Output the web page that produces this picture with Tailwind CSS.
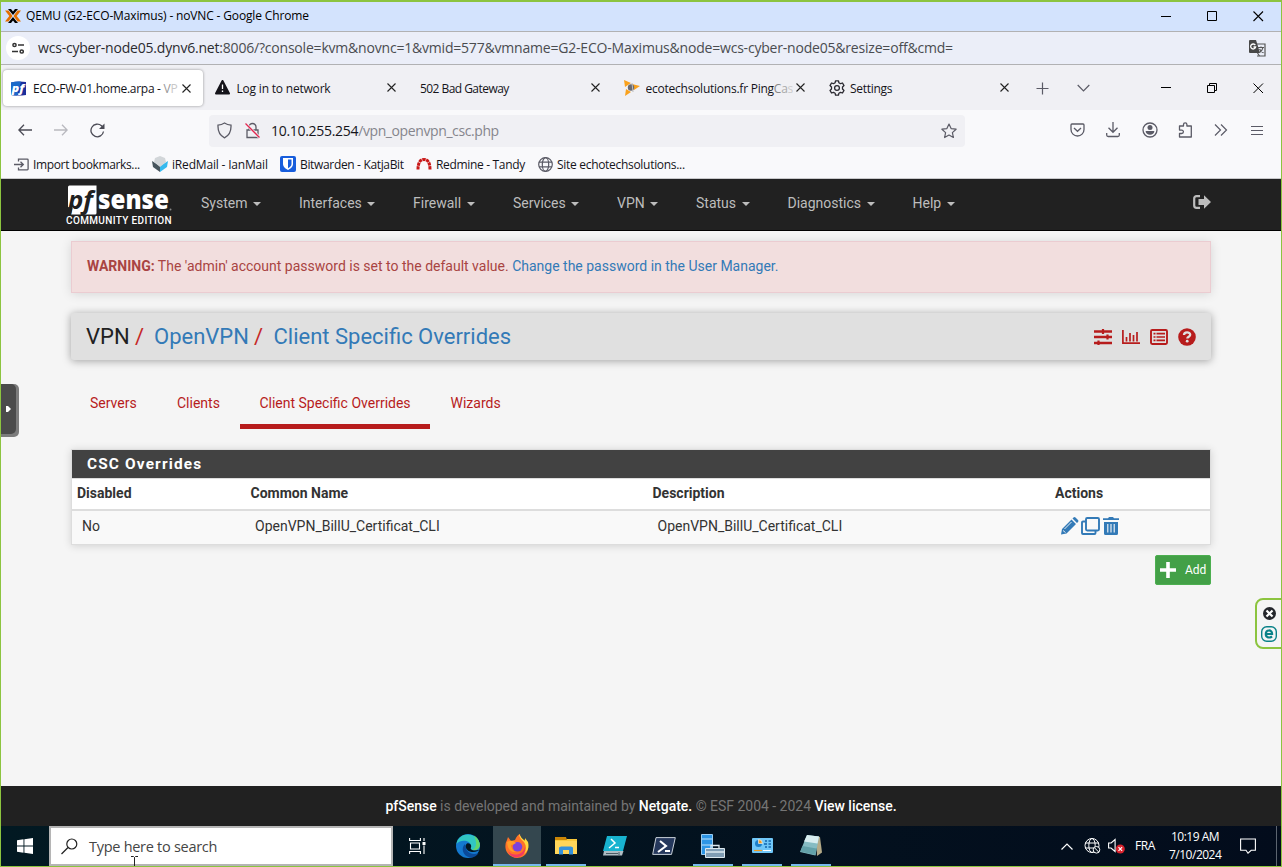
<!DOCTYPE html>
<html lang="en">
<head>
<meta charset="utf-8">
<title>QEMU (G2-ECO-Maximus) - noVNC - Google Chrome</title>
<script src="https://cdn.jsdelivr.net/npm/@tailwindcss/browser@4"></script>
</head>
<body class="w-[1282px] h-[867px] overflow-hidden">
<div class="relative w-[1282px] h-[867px] flex flex-col border-[#8cc43f] border-x border-t-2 border-b overflow-hidden bg-[#f5f5f5] font-['Open_Sans','Noto_Sans',sans-serif] text-[12px] leading-4 text-[#15141a] whitespace-nowrap">

  <!-- Chrome title bar -->
  <header class="h-[30px] shrink-0 flex items-center bg-[#d3e3fd] border-b border-[#b1b1b3] pl-1">
    <svg class="w-4 h-4 mt-[-2px]" viewBox="0 0 16 16"><path d="M3 1h3l2 2.600L10 1h3L8 7zM3 15h3l2-2.600 2 2.600h3L8 9z" fill="#000"/><path d="M0 2.500h3.500L7.500 8l-4 5.500H0L4.300 8zM16 2.500h-3.500L8.500 8l4 5.500H16L11.700 8z" fill="#e57000"/></svg>
    <span class="ml-[5px] mt-[-1px] tracking-[-0.15px] text-black">QEMU (G2-ECO-Maximus) - noVNC - Google Chrome</span>
    <div class="ml-auto flex items-center pr-[17px] gap-[35px] mt-[-1px]">
      <svg class="w-[11px] h-[11px]" viewBox="0 0 11 11"><path d="M0 5.500h10" stroke="#000"/></svg>
      <svg class="w-[11px] h-[11px]" viewBox="0 0 11 11"><path d="M.5.500h9v9H.5z" fill="none" stroke="#000"/></svg>
      <svg class="w-[11px] h-[11px]" viewBox="0 0 11 11"><path d="M.5.500l9.500 9.500M10 .5L.5 10" stroke="#000" stroke-width="1.100"/></svg>
    </div>
  </header>

  <!-- Chrome address bar -->
  <div class="h-[33px] shrink-0 flex items-center bg-[#ebeef8] border-b border-[#b1b1b3] pl-[5px]">
    <div class="w-6 h-6 rounded-full bg-white flex items-center justify-center">
      <svg class="w-3 h-3" viewBox="0 0 12 12" fill="none" stroke="#333" stroke-width="1.500"><circle cx="2.500" cy="3" r="1.600"/><path d="M6 3h6M0 9.500h6"/><circle cx="9.700" cy="9.500" r="1.600"/></svg>
    </div>
    <span class="ml-2 text-[14px] tracking-[-0.2px] text-[#4a4c50]"><span class="text-[#2b2c30]">wcs-cyber-node05.dynv6.net</span>:8006/?console=kvm&amp;novnc=1&amp;vmid=577&amp;vmname=G2-ECO-Maximus&amp;node=wcs-cyber-node05&amp;resize=off&amp;cmd=</span>
    <svg class="ml-auto mr-[15px] w-[17px] h-[17px]" viewBox="0 0 17 17"><path d="M7 4h9v12H8" fill="#ebeef8" stroke="#555" stroke-width="1.200"/><path d="M1 0h6l4 13H1a1 1 0 0 1-1-1V1a1 1 0 0 1 1-1z" fill="#484848"/><path d="M6.300 5.200A2.500 2.500 0 1 0 6.600 7H4.500" fill="none" stroke="#fff" stroke-width="1.300"/><path d="M9 7.500h6M12 6.500v1M14 7.500c-.5 2.500-2 4-3.500 5M10.500 9c1 1.800 2.500 3 4 3.800M8.500 13l2 3" fill="none" stroke="#555" stroke-width="1.200"/></svg>
  </div>

  <!-- Firefox tab strip -->
  <div class="h-[45px] shrink-0 flex items-center bg-[#f0f0f4] pl-[1px]">
    <div class="w-[204.500px] h-9 flex items-center pl-[9px] mt-px">
      <div class="flex items-center w-[200px] h-9 shrink-0 -ml-2 pl-2 bg-white rounded shadow-[0_0_3px_rgba(0,0,0,0.4)]">
        <svg class="w-[15px] h-[15px] shrink-0" viewBox="0 0 15 15"><path d="M0 1.500Q7 0 15 1v13Q7 15 0 14z" fill="#1c2f9c"/><path d="M0 1.500Q5 .3 10 .7L6 14.600 0 14z" fill="#1b6ac9"/><text x="0.800" y="11" font-family="Open Sans" font-size="11" font-weight="800" font-style="italic" fill="#fff" textLength="12.500" lengthAdjust="spacingAndGlyphs">pf</text></svg>
        <span class="ml-[7px] mt-[2px] w-[147px] overflow-hidden tracking-[-0.28px]">ECO-FW-01.home.arpa - <span class="text-[#999]">V</span><span class="text-[#c8c8c8]">P</span></span>
        <svg class="w-[9px] h-[9px] ml-[2px] shrink-0" viewBox="0 0 9 9"><path d="M.5.500l8 8M8.500.500l-8 8" stroke="#222" stroke-width="1.100"/></svg>
      </div>
    </div>
    <div class="w-[204.500px] flex items-center pl-[8px]">
      <svg class="w-[15px] h-[15px] shrink-0" viewBox="0 0 15 15"><path d="M7.500 1L14 13.500H1z" fill="#15141a" stroke="#15141a" stroke-width="2" stroke-linejoin="round"/><path d="M7.500 4.500V9M7.500 10.500V12" stroke="#fff" stroke-width="1.300"/></svg>
      <span class="ml-[7px] w-[150px] tracking-[-0.2px] mt-[3px]">Log in to network</span>
      <svg class="w-[9px] h-[9px] shrink-0" viewBox="0 0 9 9"><path d="M.5.500l8 8M8.500.500l-8 8" stroke="#222" stroke-width="1.100"/></svg>
    </div>
    <div class="w-[204.500px] flex items-center pl-[9px]">
      <span class="w-[171px] tracking-[-0.55px] mt-[3px]">502 Bad Gateway</span>
      <svg class="w-[9px] h-[9px] shrink-0" viewBox="0 0 9 9"><path d="M.5.500l8 8M8.500.500l-8 8" stroke="#222" stroke-width="1.100"/></svg>
    </div>
    <div class="w-[204.500px] flex items-center pl-[8px]">
      <svg class="w-4 h-4 shrink-0" viewBox="0 0 16 16"><path d="M0 0l7 3-6 4zM16 6l-6 4-2-6zM1 16l1-7 5 3z" fill="#f9a11c"/><circle cx="7" cy="7.500" r="3.200" fill="#6a6a70"/><path d="M8 3l1 9" stroke="#bbb"/></svg>
      <span class="ml-[6px] w-[147px] overflow-hidden tracking-[-0.24px] mt-[3px]">ecotechsolutions.fr Ping<span class="text-[#888]">C</span><span class="text-[#aaa]">a</span><span class="text-[#ccc]">s</span></span>
      <svg class="w-[9px] h-[9px] ml-[3px] shrink-0" viewBox="0 0 9 9"><path d="M.5.500l8 8M8.500.500l-8 8" stroke="#222" stroke-width="1.100"/></svg>
    </div>
    <div class="w-[204.500px] flex items-center pl-[9px]">
      <svg class="w-4 h-4 shrink-0" viewBox="0 0 16 16" fill="none" stroke="#2a2930" stroke-width="1.300" stroke-linejoin="round"><path d="M6.500.800h3l.4 2 1.600.9 2-.7 1.500 2.600L13.500 7v2l1.500 1.400-1.500 2.600-2-.7-1.600.9-.4 2h-3l-.4-2-1.600-.9-2 .7L1 10.400 2.500 9V7L1 5.600 2.500 3l2 .7 1.600-.9z"/><circle cx="8" cy="8" r="2.400"/></svg>
      <span class="ml-[5px] w-[150px] tracking-[-0.3px] mt-[3px]">Settings</span>
      <svg class="w-[9px] h-[9px] shrink-0" viewBox="0 0 9 9"><path d="M.5.500l8 8M8.500.500l-8 8" stroke="#222" stroke-width="1.100"/></svg>
    </div>
    <svg class="ml-[11px] w-[13px] h-[13px] mt-px" viewBox="0 0 13 13"><path d="M6.500.500v12M.5 6.500h12" stroke="#5b5b66" stroke-width="1.200"/></svg>
    <svg class="ml-[28px] w-[13px] h-[8px]" viewBox="0 0 13 8"><path d="M.7 1l5.800 5.800L12.300 1" fill="none" stroke="#5b5b66" stroke-width="1.200"/></svg>
    <div class="ml-auto flex items-center pr-[17px] gap-[35px] mt-px">
      <svg class="w-[11px] h-[11px]" viewBox="0 0 11 11"><path d="M0 4.500h10" stroke="#000"/></svg>
      <svg class="w-[11px] h-[11px]" viewBox="0 0 11 11"><path d="M.5 2.500h7v7H.5zM2.500 2.500v-2h7v7h-2" fill="none" stroke="#000"/></svg>
      <svg class="w-[11px] h-[11px]" viewBox="0 0 11 11"><path d="M.5.500l9.500 9.500M10 .5L.5 10" stroke="#000"/></svg>
    </div>
  </div>

  <!-- Firefox navigation toolbar -->
  <div class="h-10 shrink-0 flex items-center bg-[#f9f9fb] pl-[17px] text-[#5b5b66]">
    <svg class="w-[14px] h-[12px]" viewBox="0 0 14 12" fill="none" stroke="#4b4b55" stroke-width="1.300"><path d="M14 6H1M6 .8L.9 6 6 11.200"/></svg>
    <svg class="ml-[22px] w-[14px] h-[12px]" viewBox="0 0 14 12" fill="none" stroke="#b9b9bf" stroke-width="1.300"><path d="M0 6h13M8 .8L13.100 6 8 11.200"/></svg>
    <svg class="ml-[22px] w-[15px] h-[15px]" viewBox="0 0 15 15"><path d="M13.500 8.500A6.300 6.300 0 1 1 11.500 2.800L13.200 4.500" fill="none" stroke="#4b4b55" stroke-width="1.300"/><path d="M14.500.500V6H9z" fill="#4b4b55"/></svg>
    <div class="ml-[104px] w-[756px] h-8 rounded bg-[#f0f0f4] flex items-center pl-[8px] pr-[8px] mt-px">
      <svg class="w-[15px] h-[17px]" viewBox="0 0 15 17"><path d="M7.500 1C5.500 2.300 3.300 3 1 3.200c-.3 6 1.500 10.300 6.500 12.600 5-2.300 6.800-6.600 6.500-12.600C11.700 3 9.500 2.300 7.500 1z" fill="none" stroke="#5b5b66" stroke-width="1.300"/></svg>
      <svg class="ml-[13px] w-[15px] h-[17px]" viewBox="0 0 15 17"><path d="M4 8V5a3.500 3.500 0 0 1 7 0v3M2 8h11v7.500H2z" fill="none" stroke="#5b5b66" stroke-width="1.300"/><path d="M.5 1.500l14 14" stroke="#f0f0f4" stroke-width="3"/><path d="M.5 1.500l14 14" stroke="#e22850" stroke-width="1.300"/></svg>
      <span class="ml-[11px] text-[14px] mt-px"><span class="text-[#15141a] tracking-[-0.3px]">10.10.255.254</span><span class="text-[#85858c] tracking-[-0.4px]">/vpn_openvpn_csc.php</span></span>
      <svg class="ml-auto w-4 h-4" viewBox="0 0 16 16"><path d="M8 1l2.100 4.600 5 .6-3.700 3.400 1 4.900L8 12l-4.400 2.500 1-4.900L.9 6.200l5-.6z" fill="none" stroke="#5b5b66" stroke-width="1.200" stroke-linejoin="round"/></svg>
    </div>
    <div class="ml-auto mr-[18px] flex items-center">
      <svg class="w-[15px] h-[14px] mr-[21px]" viewBox="0 0 15 14" fill="none" stroke="#5b5b66" stroke-width="1.300"><path d="M2 1h11a1 1 0 0 1 1 1v4.500a6.500 6.500 0 0 1-13 0V2a1 1 0 0 1 1-1z"/><path d="M4 5l3.500 3.300L11 5"/></svg>
      <svg class="w-[14px] h-[16px] mr-[22px]" viewBox="0 0 14 16" fill="none" stroke="#5b5b66" stroke-width="1.300"><path d="M7 0v10M2.500 5.800L7 10.300l4.500-4.500M.7 11v2a1.500 1.500 0 0 0 1.500 1.500h9.600a1.500 1.500 0 0 0 1.500-1.500v-2"/></svg>
      <svg class="w-[16px] h-[16px] mr-[20px]" viewBox="0 0 16 16"><circle cx="8" cy="8" r="7" fill="none" stroke="#5b5b66" stroke-width="1.300"/><circle cx="8" cy="5.600" r="2.500" fill="#5b5b66"/><path d="M3.600 9h8.800c-.2 2.500-2 3.700-4.400 3.700S3.800 11.500 3.600 9z" fill="#5b5b66"/></svg>
      <svg class="w-[15px] h-[16px] mr-[21px]" viewBox="0 0 15 16"><path d="M5.500 4V2.500a1.700 1.700 0 0 1 3.400 0V4h4.400v11H1.500v-3.500h2.200a1.700 1.700 0 0 0 0-3.400H1.500V4z" fill="none" stroke="#5b5b66" stroke-width="1.300" stroke-linejoin="round"/></svg>
      <svg class="w-[14px] h-[12px] mr-[23px]" viewBox="0 0 14 12" fill="none" stroke="#5b5b66" stroke-width="1.200"><path d="M1 .5L6.500 6 1 11.500M7 .5L12.500 6 7 11.500"/></svg>
      <svg class="w-[12px] h-[11px]" viewBox="0 0 12 11"><path d="M0 1.500h12M0 5.500h12M0 9.500h12" stroke="#5b5b66"/></svg>
    </div>
  </div>

  <!-- Firefox bookmarks -->
  <div class="h-[29px] shrink-0 flex items-center bg-[#f9f9fb] border-b border-[#c9c9cb] pl-[13px]">
    <div class="w-[138px] flex items-center">
      <svg class="w-[15px] h-[13px] shrink-0" viewBox="0 0 15 13" fill="none" stroke="#5b5b66" stroke-width="1.300"><path d="M4.500 3.500V1.200h8.800a.8.800 0 0 1 .8.800v9a.8.800 0 0 1-.8.800H4.500V9.500M0 6.500h9M6.500 3.800L9.300 6.500 6.500 9.200"/></svg>
      <span class="ml-[4px] mt-[2px] tracking-[-0.36px]">Import bookmarks...</span>
    </div>
    <div class="w-[128px] flex items-center">
      <svg class="w-4 h-4 shrink-0" viewBox="0 0 16 16"><path d="M0 5l8 5v6L1 11z" fill="#46545c"/><path d="M16 5l-8 5v6l7-5z" fill="#35b9ee"/><path d="M3 2l5-2 5 2 1 4-6 5-6-5z" fill="#d2d6d9"/></svg>
      <span class="ml-[4px] mt-[2px] tracking-[-0.18px]">iRedMail - IanMail</span>
    </div>
    <div class="w-[136px] flex items-center">
      <svg class="w-4 h-4 shrink-0" viewBox="0 0 16 16"><rect width="16" height="16" rx="2" fill="#175ddc"/><path d="M3 2h10v6c0 3-3 5-5 6-2-1-5-3-5-6z" fill="#fff"/><path d="M8 3.500h3.500V8c0 2-2 3.500-3.500 4.300z" fill="#175ddc"/></svg>
      <span class="ml-[4px] mt-[2px] tracking-[-0.34px]">Bitwarden - KatjaBit</span>
    </div>
    <div class="w-[122px] flex items-center">
      <svg class="w-4 h-4 shrink-0" viewBox="0 0 16 16"><path d="M2 13.500C2 7 4 3.500 8 3.500s6 3.500 6 10" fill="none" stroke="#c91818" stroke-width="3" stroke-dasharray="3.200 .6"/></svg>
      <span class="ml-[4px] mt-[2px] tracking-[-0.33px]">Redmine - Tandy</span>
    </div>
    <svg class="w-[15px] h-[15px] shrink-0" viewBox="0 0 15 15" fill="none" stroke="#5b5b66" stroke-width="1.200"><circle cx="7.500" cy="7.500" r="6.800"/><ellipse cx="7.500" cy="7.500" rx="3.200" ry="6.800"/><path d="M1 5.200h13M1 9.800h13"/></svg>
    <span class="ml-[4px] mt-[2px] tracking-[-0.3px]">Site echotechsolutions...</span>
  </div>

  <!-- pfSense web interface -->
  <main class="h-[647px] shrink-0 flex flex-col font-[Roboto,sans-serif] text-[14px] leading-5 text-[#333]">
    <nav class="h-[52px] shrink-0 flex items-center bg-[#212121] border-b border-black pl-[65px] text-[#bdbdbd]">
      <div class="w-[135px] flex flex-col text-white pt-[2px]">
        <svg class="ml-[1px] w-[106px] h-[30px] overflow-visible" viewBox="0 0 106 30"><path d="M1 2A1.500 1.500 0 0 1 2.500.500H29.500V28a1.500 1.500 0 0 1-1.500 1.500H4L5.500 23 1 22z" fill="#fff"/><text x="1" y="23.500" font-family="Open Sans" font-size="25" font-weight="700" font-style="italic" fill="#212121" textLength="25" lengthAdjust="spacingAndGlyphs">pf</text><text x="31" y="24" font-family="Open Sans" font-size="27" font-weight="800" fill="#fff" textLength="71" lengthAdjust="spacingAndGlyphs">sense</text><circle cx="103.500" cy="24.500" r="1" fill="#888"/></svg>
        <span class="text-[10px] leading-[12px] font-medium tracking-[0.36px]">COMMUNITY EDITION</span>
      </div>
      <div class="flex items-center pb-[3px]">
        <a class="w-[98px] flex items-center gap-[6px]">System<svg class="w-[8px] h-[4px] mt-[2px]" viewBox="0 0 8 4"><path d="M0 0h8L4 4z" fill="#bdbdbd"/></svg></a>
        <a class="w-[114px] flex items-center gap-[5px]">Interfaces<svg class="w-[8px] h-[4px] mt-[2px]" viewBox="0 0 8 4"><path d="M0 0h8L4 4z" fill="#bdbdbd"/></svg></a>
        <a class="w-[100px] flex items-center gap-[6px]">Firewall<svg class="w-[8px] h-[4px] mt-[2px]" viewBox="0 0 8 4"><path d="M0 0h8L4 4z" fill="#bdbdbd"/></svg></a>
        <a class="w-[104px] flex items-center gap-[5px]">Services<svg class="w-[8px] h-[4px] mt-[2px]" viewBox="0 0 8 4"><path d="M0 0h8L4 4z" fill="#bdbdbd"/></svg></a>
        <a class="w-[79px] flex items-center gap-[5px]">VPN<svg class="w-[8px] h-[4px] mt-[2px]" viewBox="0 0 8 4"><path d="M0 0h8L4 4z" fill="#bdbdbd"/></svg></a>
        <a class="w-[91.500px] flex items-center gap-[6px]">Status<svg class="w-[8px] h-[4px] mt-[2px]" viewBox="0 0 8 4"><path d="M0 0h8L4 4z" fill="#bdbdbd"/></svg></a>
        <a class="w-[125px] flex items-center gap-[6px]">Diagnostics<svg class="w-[8px] h-[4px] mt-[2px]" viewBox="0 0 8 4"><path d="M0 0h8L4 4z" fill="#bdbdbd"/></svg></a>
        <a class="flex items-center gap-[6px]">Help<svg class="w-[8px] h-[4px] mt-[2px]" viewBox="0 0 8 4"><path d="M0 0h8L4 4z" fill="#bdbdbd"/></svg></a>
      </div>
      <svg class="ml-auto mr-[70px] mb-[5px] w-[18px] h-[14px]" viewBox="0 0 18 14"><path d="M7 1.100H3.500a2.300 2.300 0 0 0-2.300 2.300v7.200a2.300 2.300 0 0 0 2.300 2.300H7" fill="none" stroke="#bdbdbd" stroke-width="2.200"/><path d="M11 .3L18 7l-7 6.700V10H5.500V4H11z" fill="#bdbdbd"/></svg>
    </nav>

    <div class="flex-1 flex flex-col pl-[70px] pr-[70px] pt-[10px]">
      <div class="h-[52px] shrink-0 flex items-center bg-[#f2dede] border border-[#ebccd1] shadow-[0_1px_10px_rgba(0,0,0,0.13)] px-[15px] pb-[2px] text-[#a94442]"><span><b>WARNING:</b> The 'admin' account password is set to the default value. <a class="text-[#337ab7]">Change the password in the User Manager.</a></span></div>

      <div class="mt-5 h-[47px] shrink-0 flex items-center bg-[#e0e0e0] rounded-[3px] shadow-[0_1px_8px_rgba(0,0,0,0.35)] pl-[15px] pr-[15px] text-[22px] text-[#212121]">
        <div class="flex"><span class="w-[49px]">VPN</span><span class="w-[19px] text-[#c62828]">/</span><a class="w-[100px] text-[#337ab7]">OpenVPN</a><span class="w-[19.500px] text-[#c62828]">/</span><a class="text-[#337ab7]">Client Specific Overrides</a></div>
        <div class="ml-auto mt-px flex items-center gap-[10px]">
          <svg class="w-[18px] h-[16px]" viewBox="0 0 18 16"><path d="M0 2.500h18M0 8h18M0 14h18" stroke="#b71c1c" stroke-width="2.400"/><path d="M9 0v5M13.500 5.500v5M4.500 11.500V16" stroke="#b71c1c" stroke-width="2.200"/></svg>
          <svg class="w-[18px] h-[14px]" viewBox="0 0 18 14"><path d="M.9 0v13.100H18M4.500 7v4.500M8 3v8.500M11.500 5v6.500M15 2v9.500" fill="none" stroke="#b71c1c" stroke-width="1.700"/></svg>
          <svg class="w-[18px] h-[16px]" viewBox="0 0 18 16"><rect x="1" y="1" width="16" height="14" rx="1.200" fill="none" stroke="#b71c1c" stroke-width="1.900"/><path d="M3.500 4.700h2M3.500 8h2M3.500 11.300h2M6.500 4.700h8.500M6.500 8h8.500M6.500 11.300h8.500" stroke="#b71c1c" stroke-width="1.700"/></svg>
          <svg class="w-[18px] h-[18px]" viewBox="0 0 18 18"><circle cx="9" cy="9" r="8.800" fill="#b71c1c"/><path d="M6 7c0-3.400 6.200-3.400 6.200-.3 0 2-2.900 2-2.900 3.900" fill="none" stroke="#e0e0e0" stroke-width="2.300"/><circle cx="9.200" cy="13.200" r="1.400" fill="#e0e0e0"/></svg>
        </div>
      </div>

      <div class="mt-[18px] h-[51px] shrink-0 flex text-[#b71c1c]">
        <a class="pl-[19px] w-[86px] pt-[15px]">Servers</a>
        <a class="pl-[20px] w-[83px] pt-[15px]">Clients</a>
        <a class="w-[190px] text-center pt-[15px] border-b-[5px] border-[#b71c1c]">Client Specific Overrides</a>
        <a class="pl-[20.500px] pt-[15px]">Wizards</a>
      </div>

      <section class="mt-5 h-[96px] shrink-0 flex flex-col border border-[#ddd] shadow-[0_1px_8px_rgba(0,0,0,0.15)] bg-white">
        <h2 class="h-7 shrink-0 flex items-center bg-[#424242] text-white pl-[15px] pb-px font-bold text-[15.400px] tracking-[1.150px]">CSC Overrides</h2>
        <div class="grid grid-cols-[173.500px_402px_402.500px_1fr] items-center h-[33px] border-t border-b-2 border-[#ddd] pl-[5px] pb-[2px] font-bold"><span>Disabled</span><span>Common Name</span><span>Description</span><span>Actions</span></div>
        <div class="grid grid-cols-[173px_402.500px_402px_1fr] items-center flex-1 bg-[#f9f9f9] pl-[10px] pb-[4px]">
          <span>No</span><span>OpenVPN_BillU_Certificat_CLI</span><span>OpenVPN_BillU_Certificat_CLI</span>
          <span class="flex items-center gap-[3px] mt-px">
            <svg class="w-[19px] h-[18px]" viewBox="0 0 19 18"><path d="M1 17.500l1-5.500L11.500 2.500l4.500 4.500L6.500 16.500zM12.500 1.500l1-1q1-.8 2 0L18 3q.8 1 0 2l-1 1z" fill="#337ab7"/><path d="M4.500 12l7-7M3 13.500l2.500 2" stroke="#f9f9f9" stroke-width=".9"/></svg>
            <svg class="w-[19px] h-[18px] -ml-px" viewBox="0 0 19 18" fill="none" stroke="#337ab7" stroke-width="1.900"><rect x="5" y="1" width="13" height="12.500" rx="1.200"/><path d="M5 4.500H2a1 1 0 0 0-1 1V16a1 1 0 0 0 1 1h11.500a1 1 0 0 0 1-1v-2.500"/></svg>
            <svg class="w-[16px] h-[18px]" viewBox="0 0 16 18"><path d="M0 1.200h5L6 0h4l1 1.200h5V3H0zM1 5h14v11.500a1.500 1.500 0 0 1-1.500 1.500h-11A1.500 1.500 0 0 1 1 16.500z" fill="#337ab7"/><path d="M4.800 7v8.500M8 7v8.500M11.200 7v8.500" stroke="#f9f9f9" stroke-width="1.100"/></svg>
          </span>
        </div>
      </section>

      <button class="mt-[10px] self-end w-[56px] h-[30px] shrink-0 flex items-center bg-[#43a047] border border-[#4caf50] rounded-[2px] text-white text-[12px] pl-[4px]">
        <svg class="w-4 h-4 mr-[9px]" viewBox="0 0 16 16"><path d="M8 0v16M0 8h16" stroke="#fff" stroke-width="3.600"/></svg>Add
      </button>
    </div>

    <footer class="h-10 shrink-0 flex items-center justify-center bg-[#212121] text-[#757575]"><span class="whitespace-pre tracking-[-0.02px]"><a class="text-white font-medium">pfSense</a> is developed and maintained by <a class="text-white font-medium">Netgate.</a> © ESF 2004 - 2024 <a class="text-white font-medium">View license.</a></span></footer>
  </main>

  <!-- Windows taskbar -->
  <div class="h-10 shrink-0 flex bg-linear-to-r from-[#021922] to-[#030c1c] text-white">
    <div class="w-12 flex items-center justify-center"><svg class="w-4 h-4" viewBox="0 0 16 16"><path d="M0 2.200L6.500 1.300V7.600H0zM7.400 1.200L16 0v7.600H7.400zM0 8.400h6.500v6.300L0 13.800zM7.400 8.400H16V16l-8.600-1.200z" fill="#fff"/></svg></div>
    <div class="w-[344px] h-10 bg-white border-2 border-[#b5b5b5] flex items-center pl-[10px]">
      <svg class="w-[17px] h-[17px]" viewBox="0 0 17 17" fill="none" stroke="#222" stroke-width="1.200"><circle cx="10.800" cy="6" r="5"/><path d="M7 9.500L.5 16"/></svg>
      <span class="ml-[11px] text-[14.500px] tracking-[-0.28px] text-[#454545] mt-px">Type here to search</span>
    </div>
    <div class="w-12 flex items-center justify-center"><svg class="w-[17px] h-[16px]" viewBox="0 0 17 16" fill="none" stroke="#fff" stroke-width="1.100"><path d="M.6 0v2.500h10.800V0M.6 16v-2.500h10.800V16M1.500 5h9v6h-9zM15 0v3M15 7.500V16"/><path d="M13.500 4h3v3h-3z" fill="#fff" stroke="none"/></svg></div>
    <div class="w-[52px] flex items-center justify-center pl-[2px]"><svg class="w-6 h-6" viewBox="0 0 24 24"><circle cx="12" cy="12" r="12" fill="#1479cf"/><path d="M.5 10C2-2 20-3 23.500 9c1.500 6-3.500 8-7.500 7-3-1-1-2-1-4.500C14.500 6.500 5 4.500.5 10z" fill="#31c6c3"/><path d="M18 1.600q4.300 2.700 5.700 7.900c.8 5-3.200 7.500-7.200 6.500 5-3 4-9 1.500-14.400z" fill="#62d66c"/><path d="M9 10c-4 3-3 12 5 13.500 4 .3 7-2 8.500-4.500-7 3-13-1-13.500-9z" fill="#0b4a99"/><path d="M11 9.500c-3 2-1 8 5 8.500 3.500.3 6.500-1 7-2-3 .8-7 .6-8-.8-.8-1 .3-1.500.2-3.200-.2-2-2.500-3.200-4.200-2.500z" fill="#031722"/></svg></div>
    <div class="w-12 h-10 flex items-center justify-center bg-[#34474f] border-b-2 border-[#76b9ed] pt-[2px]"><svg class="w-6 h-6" viewBox="0 0 24 24"><path d="M2 6l1-3 3 4 4-1q2-5 5-6 0 4 4 7l1-2q4 5 3 10c-1 6-6 9-11 9S1 20 .5 14Q0 9 2 6z" fill="#ff7328"/><path d="M14 0q0 4 5 8 4 6 0 12 6-4 4-12l-3-4v3q-4-3-6-7z" fill="#ffd83c"/><path d="M3 17q4 5 11 3 5-2 6-7 1 9-8 10.500-6 .5-9-6.500z" fill="#f13a62"/><circle cx="12.500" cy="12.800" r="4.800" fill="#7c42db"/><path d="M2 8q5-3 9 1-3 2-5 2 0 5 5 7-8 1-9-10z" fill="#ff9d27"/></svg></div>
    <div class="ml-[5px] w-10 h-10 flex items-center justify-center border-b-2 border-[#76b9ed]"><svg class="w-[22px] h-[19px] mt-px" viewBox="0 0 22 19"><path d="M0 1h8l1.500 2H22v15H0z" fill="#f9c83a"/><path d="M0 1h11l1 3H0z" fill="#c98507"/><path d="M0 5h22v13H0z" fill="#ffd65a"/><path d="M4 18.500v-7l2-1h10l2 1v7h-4V14H8v4.500z" fill="#3492dc"/></svg></div>
    <div class="ml-[9px] w-10 flex items-center justify-center"><svg class="w-[24px] h-[20px]" viewBox="0 0 24 20"><path d="M4 0h20l-4 15H0z" fill="#18b3d0"/><path d="M1 15h19.500l-1.500 4.500H0z" fill="#aebcc3"/><path d="M8 3l4 4-6 5M12 11.500h4" stroke="#fff" stroke-width="1.500" fill="none"/><path d="M3 17.500h12M16 16v3" stroke="#4a5c66"/></svg></div>
    <div class="ml-[9px] w-10 flex items-center justify-center"><svg class="w-[24px] h-[18px]" viewBox="0 0 24 18"><path d="M4 .6h19.300L19.500 17.400H.7z" fill="#25385c" stroke="#c8d0d8"/><path d="M8 4l6 5-8 6M13 14h5" stroke="#fff" stroke-width="2.100" fill="none"/></svg></div>
    <div class="ml-[9px] w-10 flex items-center justify-center border-b-2 border-[#76b9ed]"><svg class="w-6 h-6 mt-px" viewBox="0 0 24 24"><path d="M.5.500h11v20H.5z" fill="#2d95e5" stroke="#9bcdf2"/><path d="M1 5h10M1 11h10" stroke="#bfe2fa"/><path d="M4.500 14.500h19v9h-19z" fill="#7f9cb3" stroke="#dce8ef"/><path d="M10 14v-2.500h8V14M4 18h20" fill="none" stroke="#dce8ef" stroke-width="1.300"/></svg></div>
    <div class="ml-[9px] w-10 flex items-center justify-center border-b-2 border-[#76b9ed]"><svg class="w-[21px] h-[15px]" viewBox="0 0 21 15"><rect width="21" height="15" rx="1" fill="#70c7f8"/><circle cx="6.500" cy="5.500" r="3.500" fill="#1c7fc9"/><path d="M6.500 5.500V1.600a3.900 3.900 0 0 1 3.900 3.900z" fill="#ef9b22" stroke="#fff" stroke-width=".6"/><path d="M13 3h2M12 6h3M13 9h2M16.500 3h2.500M16.500 6h2.500M16.500 9h2.500" stroke="#1267ac" stroke-width="1.500"/><path d="M2 12.500h8" stroke="#ef9b22" stroke-width="1.200"/><path d="M11 12.500h8" stroke="#fff"/></svg></div>
    <div class="ml-[9px] w-10 flex items-center justify-center border-b-2 border-[#76b9ed]"><svg class="w-[22px] h-[22px]" viewBox="0 0 22 22"><path d="M16 2l4 1 2 15.500-5 3.500z" fill="#b4aa88"/><path d="M7 1l12 1.500-3.500 19L0 18z" fill="#86bcc3"/><path d="M7 1l12 1.500-1.500 7L4 7.500z" fill="#d8edf0"/><path d="M2.500 12l14 2.500-1.200 6.500L.5 17.500z" fill="#63a1a9"/></svg></div>
    <div class="ml-auto flex items-center pr-[4px]">
      <svg class="w-3 h-[7px]" viewBox="0 0 12 7"><path d="M.5 6.500L6 1l5.500 5.500" fill="none" stroke="#fff" stroke-width="1.200"/></svg>
      <svg class="ml-[11px] w-[17px] h-[16px]" viewBox="0 0 17 16" fill="none" stroke="#fff"><circle cx="8" cy="7.500" r="7"/><ellipse cx="8" cy="7.500" rx="3.200" ry="7"/><path d="M1 5h14M1 10h14"/><circle cx="12.500" cy="11.800" r="3.300" fill="#04101c"/><path d="M10.300 9.600l4.400 4.400"/></svg>
      <svg class="ml-[7px] w-[17px] h-[16px]" viewBox="0 0 17 16"><path d="M.6 5h2.500l4-3.500v12L3 10H.6z" fill="none" stroke="#fff" stroke-width="1.100"/><circle cx="12.300" cy="11" r="4.500" fill="#d9232e"/><path d="M10.500 9.200l3.600 3.600M14.100 9.200l-3.600 3.600" stroke="#fff" stroke-width="1.200"/></svg>
      <span class="ml-[10px] w-[34px] tracking-[-0.4px]">FRA</span>
      <div class="w-[52px] text-center leading-[18px] tracking-[-0.5px]">10:19 AM<br>7/10/2024</div>
      <svg class="ml-[19px] w-4 h-4" viewBox="0 0 16 16"><path d="M.6 1h14.800v11.300h-4.200L8 15.200l-2-2.900H.6z" fill="none" stroke="#fff" stroke-width="1.100"/></svg>
      <div class="ml-5 w-px h-10 bg-[#5c646f]"></div>
    </div>
  </div>

  <!-- noVNC control handle -->
  <div class="absolute left-0 top-[382px] w-[18px] h-[53px] bg-[#7c7c7c] rounded-r-[5px]"><div class="w-[15px] h-[50px] bg-[#4b4b4b] rounded-r-[5px] flex items-center pl-[5px]"><svg class="w-[5px] h-[6px]" viewBox="0 0 5 6"><path d="M0 0h2l3 3-3 3H0z" fill="#fff"/></svg></div></div>

  <!-- Browser security badge -->
  <div class="absolute right-[-1px] top-[596px] w-[27px] h-[51px] border-2 border-r border-[#8cc43f] rounded-l-[8px] bg-[#f5f5f5] flex flex-col items-center pt-[7px] gap-[6px]">
    <svg class="w-[13px] h-[13px]" viewBox="0 0 13 13"><circle cx="6.500" cy="6.500" r="6.500" fill="#25272c"/><path d="M3.500 3.500l6 6M9.500 3.500l-6 6" stroke="#fff" stroke-width="2.200"/></svg>
    <svg class="w-4 h-4" viewBox="0 0 16 16"><rect x=".7" y=".7" width="14.600" height="14.600" rx="5" fill="#f5f5f5" stroke="#0a8288" stroke-width="1.400"/><path d="M4.800 8h6.300c0-4.800-6.300-4.600-6.300 0 0 4 4 4.200 6.200 2.300" fill="none" stroke="#0a8288" stroke-width="2.200"/></svg>
  </div>

  <!-- Text cursor -->
  <svg class="absolute left-[130px] top-[854px] w-[7px] h-[10px]" viewBox="0 0 7 10"><path d="M0 .5h2.500L3.500 1.500 4.500.500H7M3.500 1.500V10" fill="none" stroke="#222"/></svg>
</div>
</body>
</html>
